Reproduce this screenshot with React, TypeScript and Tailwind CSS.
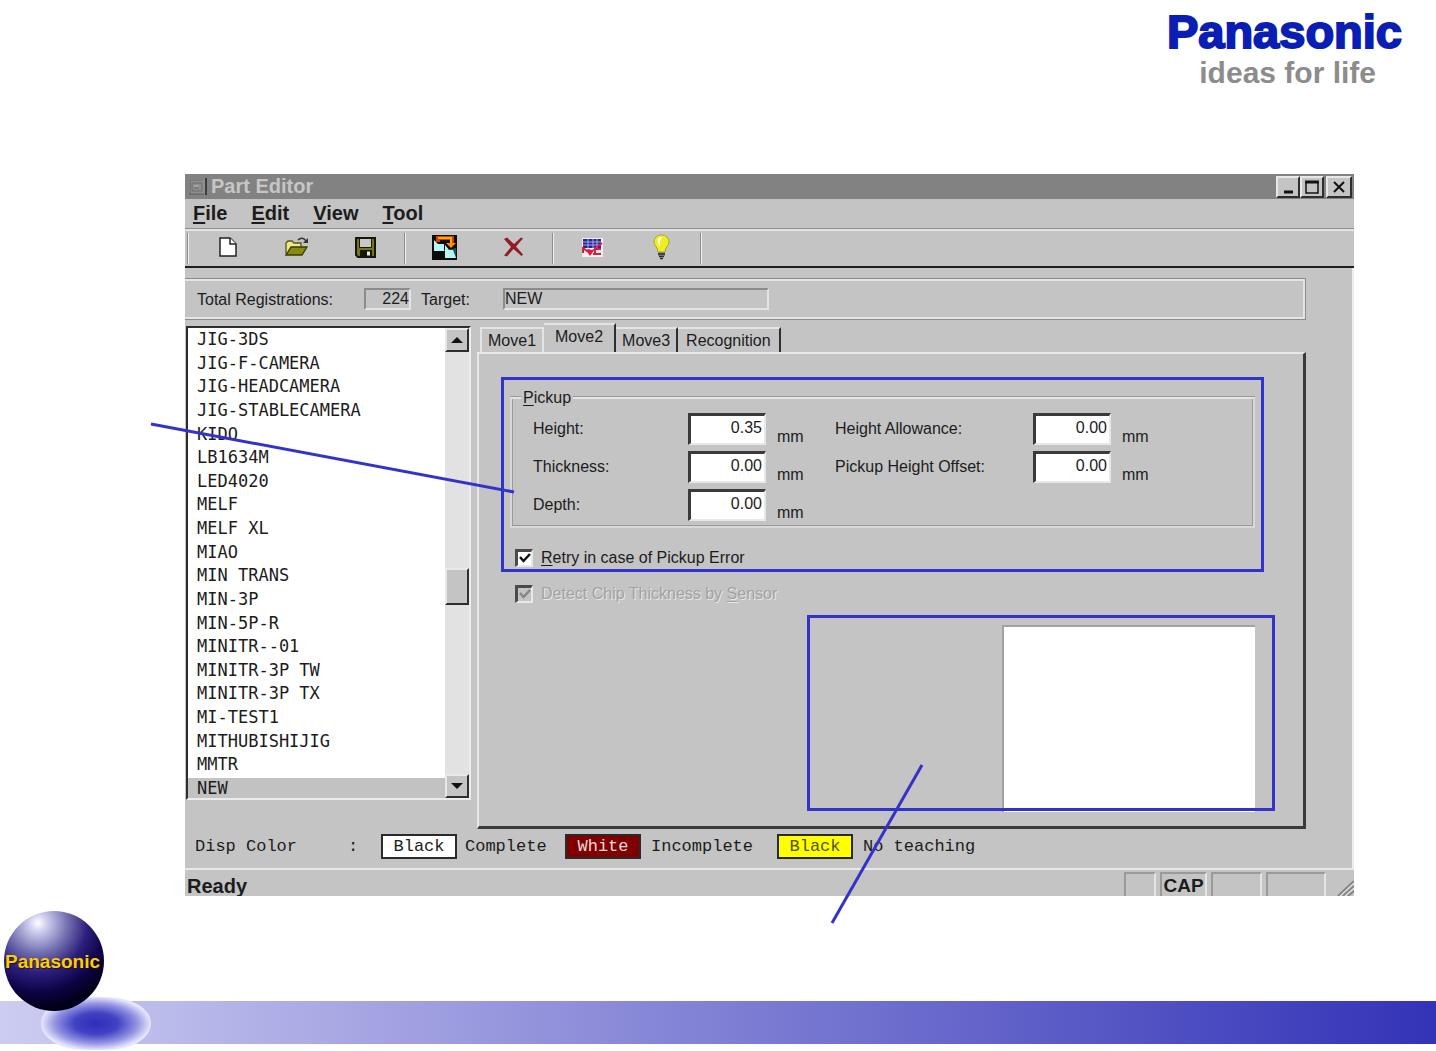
import React, { useState } from "react";
import clsx from "clsx";

const parts = [
  "JIG-3DS",
  "JIG-F-CAMERA",
  "JIG-HEADCAMERA",
  "JIG-STABLECAMERA",
  "KIDO",
  "LB1634M",
  "LED4020",
  "MELF",
  "MELF XL",
  "MIAO",
  "MIN TRANS",
  "MIN-3P",
  "MIN-5P-R",
  "MINITR--01",
  "MINITR-3P TW",
  "MINITR-3P TX",
  "MI-TEST1",
  "MITHUBISHIJIG",
  "MMTR",
  "NEW",
];

const menus = ["File", "Edit", "View", "Tool"];
const tabs = ["Move1", "Move2", "Move3", "Recognition"];

const raised =
  "bg-[#c4c4c4] border-2 border-t-[#e8e8e8] border-l-[#e8e8e8] border-b-[#2e2e2e] border-r-[#2e2e2e]";

const App = () => {
  return (
    <div className="min-h-screen flex flex-col bg-white overflow-x-hidden font-['Liberation_Sans',Arial,sans-serif] text-[#1c1c1c]">
      <header className="flex justify-end h-[174px] pr-[34px] pt-2">
        <BrandLogo />
      </header>
      <main className="ml-[185px] mr-[82px]">
        <PartEditor />
      </main>
      <SlideFooter />
    </div>
  );
};

export default App;

const BrandLogo = () => (
  <div className="text-right font-bold">
    <p className="text-[47px] leading-[48px] text-[#0a1eb4] [-webkit-text-stroke:2px_#0a1eb4]">
      Panasonic
    </p>
    <p className="text-[30px] leading-[34px] pr-[26px] text-[#8c8c8c]">
      ideas for life
    </p>
  </div>
);

const PartEditor = () => {
  return (
    <div className="bg-[#c4c4c4]">
      <TitleBar />
      <MenuBar />
      <Toolbar />
      <div className="border-r-2 border-[#ececec] pt-2.5">
        <Summary />
        <div className="flex gap-1.5 pl-px pr-[46px]">
          <PartList />
          <MovePanel />
        </div>
        <Legend />
      </div>
      <StatusBar />
    </div>
  );
};

const TitleBar = () => (
  <div className="flex items-center h-[25px] bg-[#828282] pl-1 pr-0.5">
    <svg width="18" height="18" viewBox="0 0 18 18" aria-hidden="true">
      <rect x="0" y="1" width="16" height="15" fill="#8f8f8f" />
      <path d="M1 16V2h13" fill="none" stroke="#6a6a6a" strokeWidth="1" />
      <path d="M17 0v17" fill="none" stroke="#3c3c3c" strokeWidth="2" />
      <path d="M0 16h15" fill="none" stroke="#5a5a5a" strokeWidth="1" />
      <path d="M3 5h10M3 5v8h10V5M5 10h5" fill="none" stroke="#6a6a6a" strokeWidth="1" />
      <path d="M5 8h5" stroke="#b4b4b4" strokeWidth="1" />
    </svg>
    <h1 className="flex-1 pl-1 pb-0.5 text-[20px] leading-6 font-bold text-[#c6c6c6]">
      Part Editor
    </h1>
    <button aria-label="Minimize" className={clsx(raised, "w-6 h-[22px] grid place-items-center")}>
      <svg width="16" height="16" viewBox="0 0 16 16">
        <path d="M4 13h9" stroke="#111" strokeWidth="3" />
      </svg>
    </button>
    <button aria-label="Maximize" className={clsx(raised, "w-6 h-[22px] grid place-items-center")}>
      <svg width="16" height="16" viewBox="0 0 16 16">
        <path d="M2 3h12v11H2z" fill="none" stroke="#111" strokeWidth="1.5" />
        <path d="M1 3h14" stroke="#111" strokeWidth="3" />
      </svg>
    </button>
    <button aria-label="Close" className={clsx(raised, "w-[26px] h-[22px] ml-0.5 grid place-items-center")}>
      <svg width="16" height="16" viewBox="0 0 16 16">
        <path d="M3 3l10 10M13 3L3 13" stroke="#111" strokeWidth="2" />
      </svg>
    </button>
  </div>
);

const MenuBar = () => (
  <nav className="flex h-[30px] items-center gap-6 pl-2 pb-0.5 border-b border-[#8c8c8c]">
    {menus.map((menu) => (
      <button key={menu} className="text-[20px] leading-6 font-bold">
        <span className="underline underline-offset-2">{menu[0]}</span>
        {menu.slice(1)}
      </button>
    ))}
  </nav>
);

const Separator = () => (
  <span className="w-0.5 h-[31px] border-l border-[#8c8c8c] bg-[#f0f0f0]" />
);

interface ToolButtonProps {
  label: string;
  children: React.ReactNode;
}

const ToolButton: React.FC<ToolButtonProps> = ({ label, children }) => (
  <button aria-label={label} className="w-[69px] h-7 grid place-items-center">
    {children}
  </button>
);

const Toolbar = () => (
  <div className="flex gap-1 h-[39px] pl-0.5 pt-0.5 border-t-2 border-t-[#e4e4e4] border-b-2 border-b-[#1e1e1e]">
    <Separator />
    <div className="flex">
      <ToolButton label="New">
        <svg width="18" height="20" viewBox="0 0 18 20">
          <path d="M1 1h10l6 6v12H1z" fill="#fff" stroke="#222" strokeWidth="1.5" />
          <path d="M11 1v6h6" fill="#fff" stroke="#222" strokeWidth="1.5" />
        </svg>
      </ToolButton>
      <ToolButton label="Open">
        <svg width="24" height="20" viewBox="0 0 24 20">
          <path d="M1 17V6l2-2h4l2 2h7v4" fill="#e9e98a" stroke="#55551a" strokeWidth="1.3" />
          <path d="M1 18L6 10h16l-5 8z" fill="#8a8a10" stroke="#3a3a00" strokeWidth="1.3" />
          <path d="M13 3c3-3 6-2 8 1" fill="none" stroke="#333" strokeWidth="1.5" />
          <path d="M23 1v5h-5z" fill="#333" />
        </svg>
      </ToolButton>
      <ToolButton label="Save">
        <svg width="21" height="21" viewBox="0 0 21 21">
          <path d="M1 1h19v19H3l-2-2z" fill="#77770c" stroke="#15150a" strokeWidth="2" />
          <path d="M5 2h11v8H5z" fill="#c8c8c8" />
          <path d="M4.500 2v8.500h12V2" fill="none" stroke="#15150a" strokeWidth="1" />
          <path d="M5 13h12v7H5z" fill="#15150a" />
          <path d="M12 14.500h3v4h-3z" fill="#e8e8e8" />
        </svg>
      </ToolButton>
    </div>
    <Separator />
    <div className="flex">
      <ToolButton label="Replace">
        <svg width="25" height="25" viewBox="0 0 25 25">
          <path d="M0 0h25v25H0z" fill="#0b0b0b" />
          <path d="M2 5l11 11H2z" fill="#b6f6f6" />
          <path d="M2 9h10v7H2z" fill="#b6f6f6" />
          <path d="M13 10l11 13H13z" fill="#b6f6f6" />
          <path d="M24 13v10l-9-8z" fill="#0c5a60" />
          <path d="M13 15h8l3 8H13z" fill="#b6f6f6" />
          <path d="M6 7V3h14v6" fill="none" stroke="#d63a00" strokeWidth="4" />
          <path d="M6 3h13v6" fill="none" stroke="#ffb400" strokeWidth="2" />
          <path d="M14 8h10l-5 5z" fill="#ff8a00" />
          <path d="M8 5h7v2H8z" fill="#0b0b0b" />
        </svg>
      </ToolButton>
      <ToolButton label="Delete">
        <svg width="21" height="20" viewBox="0 0 21 20">
          <path d="M1 2l3-1.500 7 6.500 7-6.500 2 1-7 8 7 8-1.500 1.500-8-7L4 19.500 1 18.500 8 10z" fill="#921b26" />
        </svg>
      </ToolButton>
    </div>
    <Separator />
    <div className="flex">
      <ToolButton label="Chart">
        <svg width="21" height="19" viewBox="0 0 21 19">
          <path d="M0 0h21v19H0z" fill="#f2eef6" />
          <path d="M1 1h18v9H1z" fill="#23239a" />
          <path d="M6 1v9M11 1v9M15 1v9M1 4h18M1 7h18" stroke="#a9a9e6" strokeWidth="1" />
          <path d="M1 9v6M1 10l4 3 5 1M13 9v8M13 11h6M11 16h8M20 5l-5 4" fill="none" stroke="#d81f3a" strokeWidth="2" />
          <path d="M4 12l3-1 2 1 4-1-5 7z" fill="#e01c34" />
        </svg>
      </ToolButton>
      <ToolButton label="Hint">
        <svg width="17" height="26" viewBox="0 0 17 26">
          <path d="M8.500 1C4 1 1 4 1 8c0 4 4 5 4 10h7c0-5 4-6 4-10 0-4-3-7-7.500-7z" fill="#eeee22" stroke="#a3a332" strokeWidth="1" />
          <path d="M5 5c1-2 3-2 4-2l-2 4 0 6-2-4z" fill="#fffff0" />
          <path d="M5 18h7v4H5z" fill="#8b8b8b" />
          <path d="M5 20h7M6 22.500h5" stroke="#2c2c2c" strokeWidth="1.500" />
          <path d="M7 24.500h3" stroke="#2c2c2c" strokeWidth="1.500" />
        </svg>
      </ToolButton>
    </div>
    <Separator />
  </div>
);

const readout =
  "h-[22px] border-2 border-t-[#8c8c8c] border-l-[#8c8c8c] border-b-[#e4e4e4] border-r-[#e4e4e4] bg-transparent text-[16px] leading-4";

const Summary = () => (
  <div className="mr-[46px] border-b border-[#8c8c8c] border-t border-r">
    <div className="flex items-center h-10 pl-3 text-[16px] border-y-2 border-r-2 border-y-[#e4e4e4] border-r-[#e4e4e4]">
      <label htmlFor="total" className="w-[167px] pt-0.5">
        Total Registrations:
      </label>
      <input id="total" readOnly value="224" className={clsx(readout, "w-[47px] text-right")} />
      <label htmlFor="target" className="w-[92px] pl-2.5 pt-0.5">
        Target:
      </label>
      <input id="target" readOnly value="NEW" className={clsx(readout, "w-[266px]")} />
    </div>
  </div>
);

const PartList = () => {
  const [selected, setSelected] = useState("NEW");
  return (
    <div className="flex w-[285px] pt-1.5 pb-[29px]">
      <div className="flex flex-1 bg-white border-2 border-t-[#2e2e2e] border-l-[#2e2e2e] border-b-[#ececec] border-r-[#ececec]">
        <ul
          role="listbox"
          aria-label="Parts"
          className="flex-1 flex flex-col justify-between pt-px font-['DejaVu_Sans_Mono',monospace] text-[17px] leading-5"
        >
          {parts.map((part) => (
            <li
              key={part}
              role="option"
              aria-selected={part === selected}
              onClick={() => setSelected(part)}
              className={clsx("pl-[9px] cursor-default", part === selected && "bg-[#c2c2c2]")}
            >
              {part}
            </li>
          ))}
        </ul>
        <div className="w-6 flex flex-col bg-[#e2e2e2]">
          <button aria-label="Scroll up" className={clsx(raised, "h-6 grid place-items-center")}>
            <svg width="12" height="6" viewBox="0 0 12 6">
              <path d="M6 0l6 6H0z" fill="#111" />
            </svg>
          </button>
          <div className="grow-[215]" />
          <div className={clsx(raised, "h-[37px]")} />
          <div className="grow-[169]" />
          <button aria-label="Scroll down" className={clsx(raised, "h-6 grid place-items-center")}>
            <svg width="12" height="6" viewBox="0 0 12 6">
              <path d="M6 6l6-6H0z" fill="#111" />
            </svg>
          </button>
        </div>
      </div>
    </div>
  );
};

const Tabs = () => {
  const [active, setActive] = useState("Move2");
  return (
    <div role="tablist" className="flex items-end h-[29px] pl-[3px] text-[16px]">
      {tabs.map((tab) => (
        <button
          key={tab}
          role="tab"
          aria-selected={tab === active}
          onClick={() => setActive(tab)}
          className={clsx(
            "border-t-2 border-[#e4e4e4] leading-5",
            tab === active ? "h-[29px] pb-1" : "h-[25px]",
            tab === "Move1" ? "border-x-2" : "border-r-2 border-r-[#2e2e2e]",
            tab === "Move2" && "px-[11px]",
            tab === "Recognition" && "px-2",
            (tab === "Move1" || tab === "Move3") && "px-1.5"
          )}
        >
          {tab}
        </button>
      ))}
    </div>
  );
};

interface FieldProps {
  id: string;
  label: string;
  value: string;
  wide?: boolean;
}

const Field: React.FC<FieldProps> = ({ id, label, value, wide }) => (
  <div className="flex items-center h-8">
    <label htmlFor={id} className={wide ? "w-[198px]" : "w-[155px]"}>
      {label}
    </label>
    <input
      id={id}
      defaultValue={value}
      className="w-[78px] h-8 pb-1 pr-0.5 bg-white text-right border-t-3 border-l-3 border-b-2 border-r-2 border-t-[#3a3a3a] border-l-[#3a3a3a] border-b-[#e8e8e8] border-r-[#e8e8e8]"
    />
    <span className="pl-[11px] pt-4 leading-4">mm</span>
  </div>
);

interface CheckProps {
  label: React.ReactNode;
  disabled?: boolean;
}

const Check: React.FC<CheckProps> = ({ label, disabled }) => (
  <label
    className={clsx(
      "flex items-center h-5 pl-[5px] gap-2",
      disabled && "text-[#a2a2a2] [text-shadow:1px_1px_0_#e8e8e8]"
    )}
  >
    <span className="grid">
      <input
        type="checkbox"
        defaultChecked
        disabled={disabled}
        className={clsx(
          "appearance-none [grid-area:1/1] size-[18px] border-t-3 border-l-3 border-b-2 border-r-2 border-t-[#4a4a4a] border-l-[#4a4a4a] border-b-[#e8e8e8] border-r-[#e8e8e8] peer",
          disabled ? "bg-[#c4c4c4]" : "bg-white"
        )}
      />
      <svg
        width="18"
        height="18"
        viewBox="0 0 18 18"
        className="[grid-area:1/1] pointer-events-none invisible peer-checked:visible"
      >
        <path d="M5 8l3.500 4L15 5" fill="none" stroke={disabled ? "#858585" : "#111"} strokeWidth="2.5" />
      </svg>
    </span>
    <span>{label}</span>
  </label>
);

const MovePanel = () => (
  <div className="flex-1 pt-[3px]">
    <Tabs />
    <div
      role="tabpanel"
      className="flex flex-col pt-[34px] pb-3.5 pl-[31px] pr-12 text-[16px] border-2 border-t-[#e8e8e8] border-l-[#e8e8e8] border-b-[#3a3a3a] border-r-[#3a3a3a] border-b-3 border-r-3"
    >
      <div className="relative">
        <fieldset className="px-[21px] pt-[5px] pb-[5px] border-2 border-[#d8d8d8] border-t-[#e4e4e4] shadow-[inset_1px_0_0_#9a9a9a,0_-1px_0_#9a9a9a,inset_-1px_-1px_0_#9a9a9a]">
          <legend className="-ml-3 px-0.5 leading-5 bg-[#c4c4c4]">
            <span className="underline underline-offset-2">P</span>ickup
          </legend>
          <div className="flex">
            <div className="flex flex-col gap-1.5 w-[302px]">
              <Field id="height" label="Height:" value="0.35" />
              <Field id="thickness" label="Thickness:" value="0.00" />
              <Field id="depth" label="Depth:" value="0.00" />
            </div>
            <div className="flex flex-col gap-1.5">
              <Field id="allowance" label="Height Allowance:" value="0.00" wide />
              <Field id="offset" label="Pickup Height Offset:" value="0.00" wide />
            </div>
          </div>
        </fieldset>
        <div className="mt-5">
          <Check
            label={
              <>
                <span className="underline underline-offset-2">R</span>etry in case of Pickup Error
              </>
            }
          />
        </div>
        {/* callout around the pickup settings */}
        <div className="absolute -inset-x-[9px] -top-[11px] -bottom-1 border-3 border-[#3333cc] pointer-events-none">
          <svg width="366" height="72" viewBox="0 0 366 72" className="absolute top-[42px] -left-[354px]">
            <path d="M1 2l363 68" stroke="#3333cc" strokeWidth="3" />
          </svg>
        </div>
      </div>
      <div className="mt-4">
        <Check
          disabled
          label={
            <>
              Detect Chip Thickness by <span className="underline underline-offset-2">S</span>ensor
            </>
          }
        />
      </div>
      <div className="relative self-end mt-[21px] w-[253px] h-[187px] bg-white border-t-2 border-l-2 border-[#a2a2a2]">
        {/* callout for the preview area */}
        <div className="absolute -top-3 -right-5 w-[468px] h-[196px] border-3 border-[#3333cc] pointer-events-none">
          <svg width="96" height="162" viewBox="0 0 96 162" className="absolute top-[145px] left-5">
            <path d="M92 2L2 160" stroke="#3333cc" strokeWidth="3" />
          </svg>
        </div>
      </div>
    </div>
  </div>
);

const swatch = "w-[76px] h-[25px] grid place-items-center border-2 border-[#2a2a2a]";

const Legend = () => (
  <div className="flex items-center pl-2.5 pt-[5px] pb-[9px] font-['Liberation_Mono',monospace] text-[17px] leading-5">
    <span className="w-[153px]">Disp Color</span>
    <span className="w-[33px]">:</span>
    <span className={clsx(swatch, "bg-white")}>Black</span>
    <span className="w-[108px] pl-2">Complete</span>
    <span className={clsx(swatch, "bg-[#800000] text-[#f0dada]")}>White</span>
    <span className="w-[136px] pl-2.5">Incomplete</span>
    <span className={clsx(swatch, "bg-[#ffff00] text-[#55550a]")}>Black</span>
    <span className="pl-2.5">No teaching</span>
  </div>
);

const pane = "h-6 border-t-2 border-l-2 border-r-2 border-t-[#9a9a9a] border-l-[#9a9a9a] border-r-[#e4e4e4]";

const StatusBar = () => (
  <footer className="flex items-end gap-1 h-7 border-t-2 border-[#e8e8e8] text-[20px] leading-6 font-bold overflow-hidden">
    <span className="flex-1 h-6 pl-0.5 pt-0.5">Ready</span>
    <span className={clsx(pane, "w-8")} />
    <span className={clsx(pane, "w-[47px] text-center text-[19px]")}>CAP</span>
    <span className={clsx(pane, "w-[51px]")} />
    <span className={clsx(pane, "w-[60px]")} />
    <svg width="24" height="16" viewBox="0 0 24 16" aria-hidden="true">
      <path d="M8 16L24 1M13 16L24 6M18 16l6-5" stroke="#858585" strokeWidth="2" />
      <path d="M10 16L24 3M15 16l9-8" stroke="#ededed" strokeWidth="1" />
    </svg>
  </footer>
);

const SlideFooter = () => (
  <div className="relative mt-auto mb-[7px] h-[43px] bg-linear-to-r/srgb from-[#ccccf2] to-[#3333b8]">
    <svg width="160" height="144" viewBox="0 0 160 144" className="absolute left-0 -bottom-[7px]" aria-hidden="true">
      <defs>
        <radialGradient id="ball" cx="0.34" cy="0.12" r="0.85">
          <stop offset="0" stopColor="#ffffff" />
          <stop offset="0.1" stopColor="#d0d0f0" />
          <stop offset="0.35" stopColor="#7370b0" />
          <stop offset="0.58" stopColor="#2c1f7c" />
          <stop offset="0.8" stopColor="#0e0448" />
          <stop offset="1" stopColor="#020018" />
        </radialGradient>
        <radialGradient id="shade">
          <stop offset="0" stopColor="#2e2eb8" />
          <stop offset="0.4" stopColor="#4242c4" />
          <stop offset="0.75" stopColor="#9494e4" />
          <stop offset="1" stopColor="#e6e6fc" />
        </radialGradient>
      </defs>
      <rect x="41" y="90" width="110" height="53" rx="44" ry="26" fill="url(#shade)" />
      <circle cx="54" cy="54" r="50" fill="url(#ball)" />
    </svg>
    <span className="absolute left-[5px] bottom-[70px] text-[19px] leading-6 font-bold text-[#ffcc00] [text-shadow:1px_1px_1px_#1a1030]">
      Panasonic
    </span>
  </div>
);
